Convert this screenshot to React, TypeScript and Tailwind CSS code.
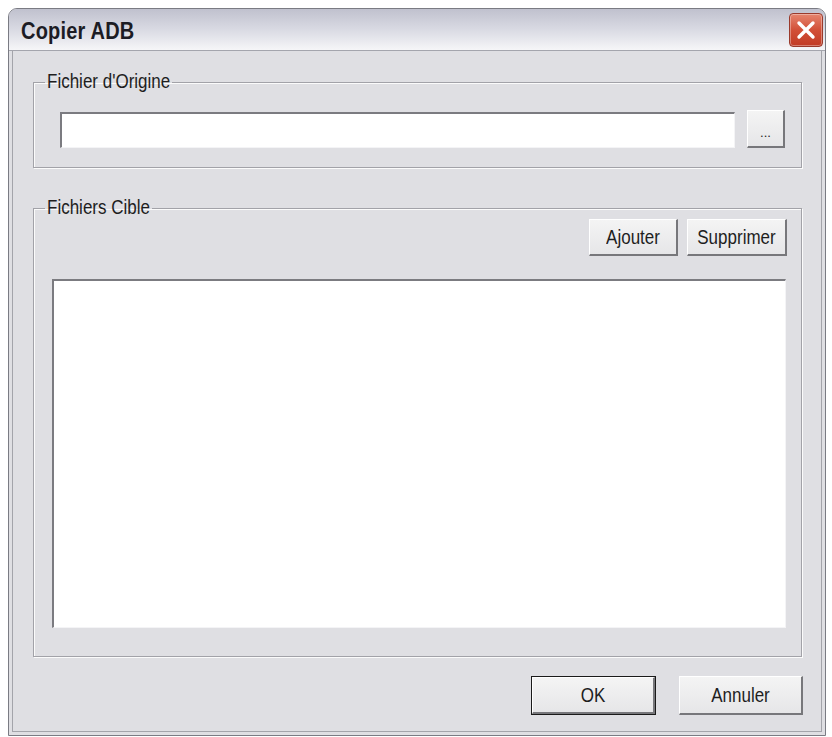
import React from "react";

// Tall, narrow dialog lettering
const Tall = ({ children }: { children: React.ReactNode }) => (
  <span className="inline-block scale-y-[1.15]">{children}</span>
);

// Raised 3D push button in the old Windows look
const Bevel = ({
  children,
  className = "",
  isDefault = false,
}: {
  children: React.ReactNode;
  className?: string;
  isDefault?: boolean;
}) => (
  <div className={`${isDefault ? "border border-[#1a1a1a]" : ""} ${className}`}>
    <button
      type="button"
      className="w-full h-full flex items-center justify-center bg-gradient-to-b from-[#f4f4f4] to-[#e6e6e8] border-t border-l border-white border-b-2 border-r-2 border-b-[#77777b] border-r-[#77777b] text-[17px] text-[#1e1e1e] leading-none"
    >
      {children}
    </button>
  </div>
);

const CloseButton = () => (
  <button
    type="button"
    className="w-[34px] h-[34px] rounded-[4px] border border-[#9a3a2c] bg-gradient-to-b from-[#e5846e] via-[#d24f37] to-[#c13b25] shadow-[inset_0_0_0_1px_rgba(255,255,255,0.35)] flex items-center justify-center"
  >
    <svg width="22" height="22" viewBox="0 0 22 22">
      <path d="M4 4 L18 18 M18 4 L4 18" stroke="#fff" strokeWidth="3.4" strokeLinecap="round" />
    </svg>
  </button>
);

export default function App() {
  return (
    <div
      className="min-h-screen bg-white pt-[8px] pl-[8px]"
      style={{ fontFamily: '"Liberation Sans", Arial, sans-serif' }}
    >
      <div className="w-[818px] h-[728px] rounded-t-[9px] border border-[#7a7b83] bg-[#dfdfe3] flex flex-col overflow-hidden">
        {/* title bar */}
        <div className="h-[42px] shrink-0 flex items-center justify-between pl-[12px] pr-[2px] bg-gradient-to-b from-[#c0c1ce] via-[#d9dae3] to-[#f6f6f8] border-b border-[#a4a5ad]">
          <span className="text-[20px] font-bold text-[#1c1c24] tracking-[0.2px] pt-[3px]">
            <Tall>Copier ADB</Tall>
          </span>
          <CloseButton />
        </div>

        {/* client area */}
        <div className="flex-1 flex flex-col mx-[3px] mb-[3px] border border-[#a3a4aa] border-t-0 pl-[20px] pr-[19px] pt-[21px] pb-[16px] text-[#1e1e1e]">
          <fieldset className="border border-[#a2a2a8] shadow-[inset_1px_1px_0_#fbfbfb,1px_1px_0_#fbfbfb] pl-[11px] pr-[16px] pb-[19px]">
            <legend className="px-[2px] text-[17px] leading-[20px]">
              <Tall>Fichier d'Origine</Tall>
            </legend>
            <div className="flex items-end gap-[12px] pl-[15px] pt-[18px]">
              <div className="flex-1 h-[36px] bg-white border-t-2 border-l-2 border-[#7b7b80] border-b border-r border-b-[#f4f4f6] border-r-[#f4f4f6]" />
              <Bevel className="w-[38px] h-[38px]">
                <span className="text-[13px] pt-[8px]">...</span>
              </Bevel>
            </div>
          </fieldset>

          <fieldset className="mt-[30px] flex-1 flex flex-col border border-[#a2a2a8] shadow-[inset_1px_1px_0_#fbfbfb,1px_1px_0_#fbfbfb] pl-[11px] pr-[14px] pb-[28px]">
            <legend className="px-[2px] text-[17px] leading-[20px]">
              <Tall>Fichiers Cible</Tall>
            </legend>
            <div className="flex-1 flex flex-col pt-[1px] pl-[7px]">
              <div className="flex justify-end gap-[9px]">
                <Bevel className="w-[89px] h-[37px]">
                  <Tall>Ajouter</Tall>
                </Bevel>
                <Bevel className="w-[100px] h-[37px]">
                  <Tall>Supprimer</Tall>
                </Bevel>
              </div>
              <div className="mt-[23px] mr-[1px] flex-1 bg-white border-t-2 border-l-2 border-[#7b7b80] border-b border-r border-b-[#f4f4f6] border-r-[#f4f4f6]" />
            </div>
          </fieldset>

          <div className="mt-[19px] flex justify-end gap-[23px] -mr-[1px]">
            <Bevel isDefault className="w-[125px] h-[39px]">
              <Tall>OK</Tall>
            </Bevel>
            <Bevel className="w-[124px] h-[39px]">
              <Tall>Annuler</Tall>
            </Bevel>
          </div>
        </div>
      </div>
    </div>
  );
}
